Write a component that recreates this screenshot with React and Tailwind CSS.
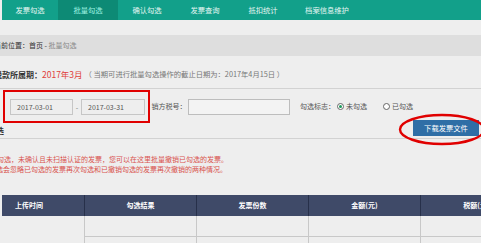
import React from 'react';

const navItems = ['发票勾选', '批量勾选', '确认勾选', '发票查询', '抵扣统计', '档案信息维护'];
const navWidths = ['w-[56px]', 'w-[60px]', 'w-[58px]', 'w-[58px]', 'w-[58px]', 'w-[70px]'];

const columns = ['上传时间', '勾选结果', '发票份数', '金额(元)', '税额(元)'];

const Radio = ({ checked, label }) => (
  <label className="flex items-center gap-[2px]">
    <span className="w-[7px] h-[7px] rounded-full border border-[#666] bg-white flex items-center justify-center">
      {checked && <span className="w-[3px] h-[3px] rounded-full bg-[#1c9a5a]" />}
    </span>
    <span>{label}</span>
  </label>
);

const App = () => {
  return (
    <div className="relative w-[481px] h-[243px] overflow-hidden bg-[#eeeeee] font-['Noto_Sans_CJK_SC',sans-serif] text-[#444]">
      {/* top nav */}
      <div className="flex h-[20px] ml-[2px] bg-[#12a08a] text-[7.3px] text-[#e6f7f3]">
        {navItems.map((item, i) => (
          <div
            key={item}
            className={`${navWidths[i]} flex items-center justify-center ${i === 1 ? 'bg-[#0d8a75] text-[#9ff3e2]' : ''}`}
          >
            {item}
          </div>
        ))}
      </div>

      <div className="h-[15px]" />

      {/* breadcrumb */}
      <div className="h-[21px] bg-[#dedede] flex items-center text-[7px] text-[#333]">
        <span className="-ml-[6px]">
          当前位置：首页 - <span className="text-[#888]">批量勾选</span>
        </span>
      </div>

      {/* period */}
      <div className="h-[33px] border-b border-[#d2d2d2] flex items-center pt-[5px] whitespace-nowrap">
        <span className="-ml-[6px] text-[8px] font-bold text-[#333]">税款所属期：</span>
        <span className="text-[8.5px] text-[#e0403a]">2017年3月</span>
        <span className="ml-[2px] text-[7.3px] text-[#777]">（ 当期可进行批量勾选操作的截止日期为：2017年4月15日 ）</span>
      </div>

      {/* filters */}
      <div className="h-[50px] border-b border-[#d2d2d2] flex">
        <div className="flex flex-col min-w-0">
          <div className="flex items-center mt-[1px] text-[7px] whitespace-nowrap">
            <div className="ml-[3px] w-[150px] h-[33px] border-2 border-[#e00000] flex items-center pl-[5px] pt-[1px]">
              <div className="w-[63px] h-[16px] border border-[#c6c6c6] bg-[#eeeeee] flex items-center pl-[6px] text-[#555]">2017-03-01</div>
              <span className="w-[8px] text-center text-[#777]">-</span>
              <div className="w-[64px] h-[16px] border border-[#c6c6c6] bg-[#eeeeee] flex items-center pl-[6px] text-[#555]">2017-03-31</div>
            </div>
            <span className="ml-[2px] text-[#555]">销方税号：</span>
            <div className="ml-[1px] w-[105px] h-[16px] border border-[#bdbdbd] bg-[#f3f3f3]" />
            <span className="ml-[10px] text-[#555]">勾选标志：</span>
            <div className="ml-[2px] flex items-center gap-[16px] text-[#555]">
              <Radio checked label="未勾选" />
              <Radio label="已勾选" />
            </div>
          </div>
          <div className="-ml-[4px] mt-[2px] text-[8px] font-bold text-[#333]">选</div>
        </div>
        <button className="ml-auto self-end mb-[2px] mr-[2px] w-[66px] h-[16px] shrink-0 bg-[#2f6ea6] text-white text-[7.3px] flex items-center justify-center">
          下载发票文件
        </button>
      </div>

      {/* notes */}
      <div className="pt-[15px] text-[7px] leading-[10px] text-[#d9534f] whitespace-nowrap">
        <div className="-ml-[3px]">勾选，未确认且未扫描认证的发票，您可以在这里批量撤销已勾选的发票。</div>
        <div className="-ml-[4px]">选会忽略已勾选的发票再次勾选和已撤销勾选的发票再次撤销的两种情况。</div>
      </div>

      {/* table */}
      <div className="mt-[21px] ml-[2px] grid grid-cols-[83px_112px_112px_112px_112px] text-[7px]">
        {columns.map((col, i) => (
          <div
            key={col}
            className={`h-[21px] bg-[#3f4a68] text-white font-bold flex items-center border-r border-[#27304a] whitespace-nowrap ${i === 0 ? 'pl-[13px]' : 'justify-center'}`}
          >
            {col}
          </div>
        ))}
        <div className="row-span-2 h-[42px] border-r border-[#c8c8c8]" />
        {columns.slice(1).map((col) => (
          <div key={`a-${col}`} className="h-[21px] border-r border-b border-[#c8c8c8]" />
        ))}
        {columns.slice(1).map((col) => (
          <div key={`b-${col}`} className="h-[21px] border-r border-[#c8c8c8]" />
        ))}
      </div>

      {/* annotation around the download button */}
      <svg className="absolute left-[398px] top-[113px]" width="90" height="34" viewBox="0 0 90 34">
        <ellipse cx="44" cy="16.5" rx="42" ry="14.5" fill="none" stroke="#e00000" strokeWidth="2.4" />
      </svg>
    </div>
  );
};

export default App;
